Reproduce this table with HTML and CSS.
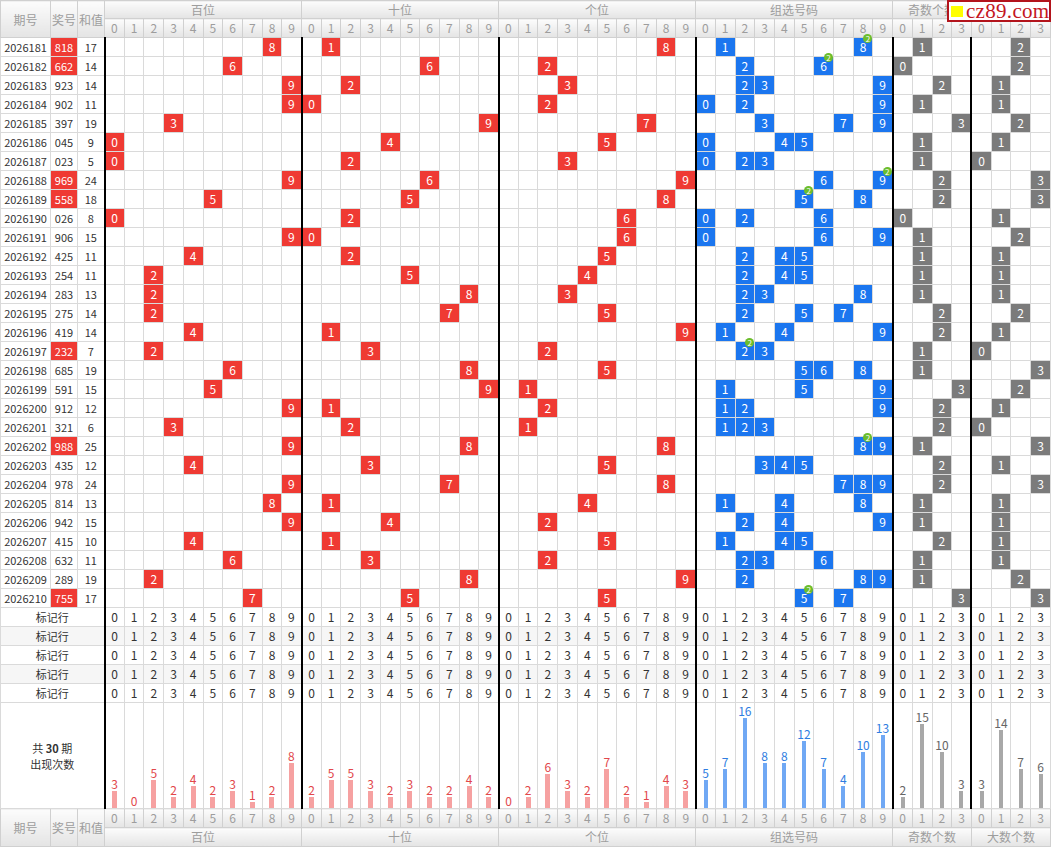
FILE: index.html
```html
<!DOCTYPE html>
<html lang="zh-CN">
<head>
<meta charset="utf-8">
<title>3D 走势图</title>
<link rel="stylesheet" href="styles.css">
</head>
<body>
<div class="page">
  <table class="chart">
    <colgroup>
      <col class="c-issue"><col class="c-num"><col class="c-sum">
      <col span="48">
    </colgroup>
    <thead>
      <tr class="head-groups">
        <th rowspan="2">期号</th><th rowspan="2">奖号</th><th rowspan="2">和值</th>
        <th colspan="10">百位</th><th colspan="10">十位</th><th colspan="10">个位</th>
        <th colspan="10">组选号码</th><th colspan="4">奇数个数</th><th colspan="4">大数个数</th>
      </tr>
      <tr class="head-digits" id="head-digits"></tr>
    </thead>
    <tbody id="draws"></tbody>
    <tfoot>
      <tr class="foot-digits" id="foot-digits">
        <th rowspan="2">期号</th><th rowspan="2">奖号</th><th rowspan="2">和值</th>
      </tr>
      <tr class="foot-groups">
        <th colspan="10">百位</th><th colspan="10">十位</th><th colspan="10">个位</th>
        <th colspan="10">组选号码</th><th colspan="4">奇数个数</th><th colspan="4">大数个数</th>
      </tr>
    </tfoot>
  </table>
  <div class="logo"><span class="logo-mark"></span><span class="logo-text">cz89.com</span></div>
</div>
<script src="app.js"></script>
</body>
</html>
```

FILE: styles.css
```css
* { box-sizing: border-box; }
html, body { margin: 0; padding: 0; background: #fff; }
body {
  font-family: "Noto Sans CJK SC", "Noto Sans", sans-serif;
  font-size: 11px;
  color: #333;
}
.page { position: relative; width: 1051px; height: 848px; overflow: hidden; }

.chart { width: 1051px; border-collapse: collapse; table-layout: fixed; }
.c-issue { width: 50px; }
.c-num { width: 27px; }
.c-sum { width: 27px; }

.chart th, .chart td {
  padding: 0;
  border: 1px solid #dadada;
  text-align: center;
  line-height: 18px;
  white-space: nowrap;
  font-weight: normal;
}
.chart thead th, .chart tfoot th {
  background: linear-gradient(#fcfcfc, #e4e4e4);
  color: #9d9d9d;
  border-color: #d0d0d0;
  font-size: 12px;
}
.head-groups th { line-height: 17px; }

.chart tbody td.gs { border-left: 2px solid #000; }

.hit-r, .hit-b, .hit-g { font-size: 12px; }
.num.pair, .hit-r { background: #ef3a33; color: #fff; }
.hit-b { background: #1b76ef; color: #fff; }
.hit-g { background: #7b7b7b; color: #fff; }
.has-rep { position: relative; }
.rep {
  position: absolute;
  top: -4px;
  right: 0;
  width: 9px;
  height: 9px;
  border-radius: 50%;
  background: #6cbd2b;
  color: #fff;
  font-size: 8px;
  line-height: 9px;
  text-align: center;
  z-index: 2;
}

.mark td { font-size: 12px; }
.mark td.mark-label { font-size: 11px; }
.mark.alt td { background: #f6f6f6; }

.stats td { height: 106px; vertical-align: bottom; }
.stats td.stat-label { vertical-align: middle; line-height: 16px; }
.stat-label b { font-weight: bold; }
.bar-wrap { display: flex; flex-direction: column; align-items: center; }
.cnt { font-size: 12px; line-height: 14px; }
.cnt.red { color: #e2474b; }
.cnt.blue { color: #2f7de1; }
.cnt.grey { color: #666; }
.bar { display: block; width: 4px; }
.bar.red { width: 5px; background: #f6a1a1; }
.bar.blue { background: #70a8f4; }
.bar.grey { background: #a8a8a8; }

.logo {
  position: absolute;
  top: 0;
  right: 0;
  width: 104px;
  height: 22px;
  border: 2px solid #b3141c;
  background: #fff;
  display: flex;
  align-items: center;
  gap: 3px;
  padding-left: 2px;
}
.logo-mark { width: 12px; height: 11px; background: #ffff00; flex: none; }
.logo-text {
  font-family: "Liberation Serif", serif;
  font-size: 21px;
  line-height: 1;
  color: #c4161e;
  letter-spacing: 0.3px;
}
```

FILE: app.js
```js
(function () {
  var draws = [
    ['2026181','818'],['2026182','662'],['2026183','923'],['2026184','902'],['2026185','397'],
    ['2026186','045'],['2026187','023'],['2026188','969'],['2026189','558'],['2026190','026'],
    ['2026191','906'],['2026192','425'],['2026193','254'],['2026194','283'],['2026195','275'],
    ['2026196','419'],['2026197','232'],['2026198','685'],['2026199','591'],['2026200','912'],
    ['2026201','321'],['2026202','988'],['2026203','435'],['2026204','978'],['2026205','814'],
    ['2026206','942'],['2026207','415'],['2026208','632'],['2026209','289'],['2026210','755']
  ];
  var groups = [
    { size: 10, kind: 'pos', idx: 0 },
    { size: 10, kind: 'pos', idx: 1 },
    { size: 10, kind: 'pos', idx: 2 },
    { size: 10, kind: 'zx' },
    { size: 4, kind: 'odd' },
    { size: 4, kind: 'big' }
  ];

  function el(tag, cls, text) {
    var e = document.createElement(tag);
    if (cls) e.className = cls;
    if (text !== undefined && text !== null) e.textContent = text;
    return e;
  }

  var headDigits = document.getElementById('head-digits');
  var footDigits = document.getElementById('foot-digits');
  groups.forEach(function (g) {
    for (var i = 0; i < g.size; i++) {
      headDigits.appendChild(el('th', '', i));
      footDigits.appendChild(el('th', '', i));
    }
  });

  var counts = groups.map(function (g) {
    var a = [];
    for (var i = 0; i < g.size; i++) a.push(0);
    return a;
  });

  var body = document.getElementById('draws');

  draws.forEach(function (d) {
    var ds = d[1].split('').map(Number);
    var sum = ds[0] + ds[1] + ds[2];
    var pair = ds[0] === ds[1] || ds[1] === ds[2] || ds[0] === ds[2];
    var odd = ds.filter(function (x) { return x % 2 === 1; }).length;
    var big = ds.filter(function (x) { return x >= 5; }).length;
    var tr = el('tr', 'draw');
    tr.appendChild(el('td', 'issue', d[0]));
    tr.appendChild(el('td', pair ? 'num pair' : 'num', d[1]));
    tr.appendChild(el('td', 'sum', sum));
    groups.forEach(function (g, gi) {
      for (var i = 0; i < g.size; i++) {
        var td = el('td', i === 0 ? 'gs' : '');
        if (g.kind === 'pos') {
          if (ds[g.idx] === i) {
            td.classList.add('hit-r');
            td.textContent = i;
            counts[gi][i]++;
          }
        } else if (g.kind === 'zx') {
          var c = ds.filter(function (x) { return x === i; }).length;
          if (c > 0) {
            td.classList.add('hit-b');
            td.textContent = i;
            counts[gi][i] += c;
            if (c > 1) {
              td.classList.add('has-rep');
              td.appendChild(el('span', 'rep', c));
            }
          }
        } else {
          var v = g.kind === 'odd' ? odd : big;
          if (v === i) {
            td.classList.add('hit-g');
            td.textContent = i;
            counts[gi][i]++;
          }
        }
        tr.appendChild(td);
      }
    });
    body.appendChild(tr);
  });

  for (var m = 0; m < 5; m++) {
    var mr = el('tr', m % 2 === 1 ? 'mark alt' : 'mark');
    var lab = el('td', 'mark-label', '标记行');
    lab.colSpan = 3;
    mr.appendChild(lab);
    groups.forEach(function (g) {
      for (var i = 0; i < g.size; i++) {
        mr.appendChild(el('td', i === 0 ? 'gs' : '', i));
      }
    });
    body.appendChild(mr);
  }

  var sr = el('tr', 'stats');
  var sl = el('td', 'stat-label');
  sl.colSpan = 3;
  sl.appendChild(document.createTextNode('共 '));
  sl.appendChild(el('b', '', '30'));
  sl.appendChild(document.createTextNode(' 期'));
  sl.appendChild(document.createElement('br'));
  sl.appendChild(document.createTextNode('出现次数'));
  sr.appendChild(sl);
  groups.forEach(function (g, gi) {
    var tone = g.kind === 'pos' ? 'red' : (g.kind === 'zx' ? 'blue' : 'grey');
    for (var i = 0; i < g.size; i++) {
      var td = el('td', i === 0 ? 'stat gs' : 'stat');
      var wrap = el('div', 'bar-wrap');
      wrap.appendChild(el('span', 'cnt ' + tone, counts[gi][i]));
      var bar = el('i', 'bar ' + tone);
      bar.style.height = (counts[gi][i] * 5.6) + 'px';
      wrap.appendChild(bar);
      td.appendChild(wrap);
      sr.appendChild(td);
    }
  });
  body.appendChild(sr);
})();
```
